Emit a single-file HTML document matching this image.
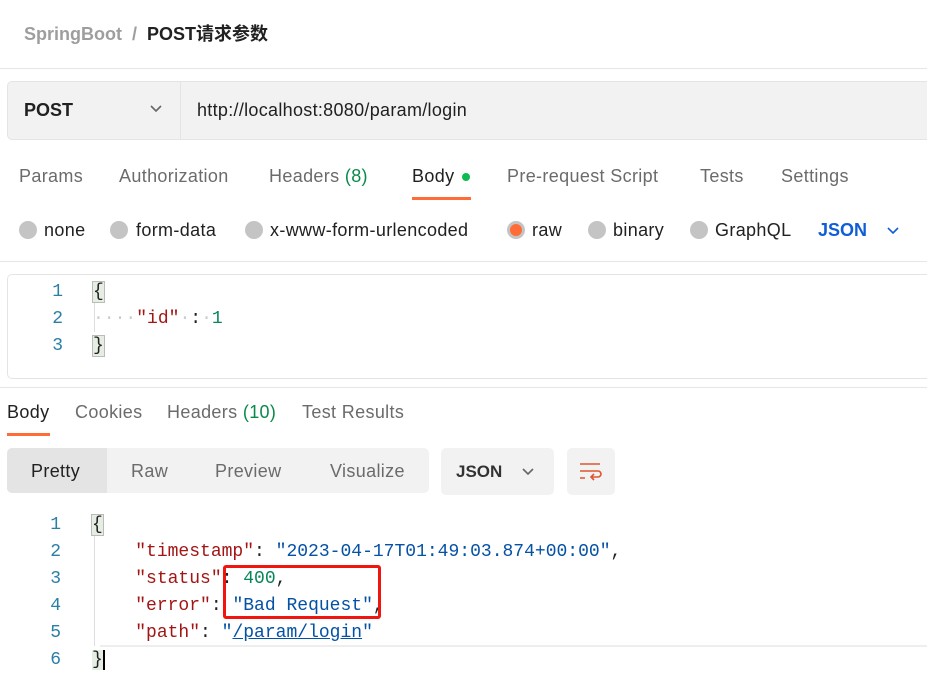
<!DOCTYPE html>
<html><head><meta charset="utf-8"><style>
*{margin:0;padding:0;box-sizing:border-box}
body{width:927px;height:665px;overflow:hidden;background:#fff;font-family:"Liberation Sans","Noto Sans CJK SC",sans-serif;position:relative;color:#212121}
.a{position:absolute;white-space:nowrap}
.t{font-size:18px;letter-spacing:0.35px;color:#6b6b6b}
.m{font-family:"Liberation Mono",monospace;font-size:18px}
.r{width:18px;height:18px;border-radius:50%;background:#c4c4c4;position:absolute}
.ln{color:#2a7fa6;text-align:right;width:30px}
.k{color:#a31515}.s{color:#0451a5}.n{color:#098658}
</style></head><body>
<div class="a" style="left:24px;top:20px;font-size:18px;font-weight:bold;color:#9e9e9e">SpringBoot &nbsp;/ &nbsp;<span style="color:#212121">POST请求参数</span></div>
<div class="a" style="left:0;top:68px;width:927px;height:1px;background:#e6e6e6"></div>
<div class="a" style="left:7px;top:81px;width:930px;height:59px;background:#f2f2f2;border:1px solid #e4e4e4;border-radius:5px"></div>
<div class="a" style="left:180px;top:82px;width:1px;height:57px;background:#e4e4e4"></div>
<div class="a" style="left:24px;top:100px;font-size:18px;font-weight:bold">POST</div>
<svg class="a" style="left:149px;top:104px" width="14" height="10"><path d="M2 2l5 5 5-5" fill="none" stroke="#666" stroke-width="1.6"/></svg>
<div class="a" style="left:197px;top:100px;font-size:18px;letter-spacing:0.3px">http://localhost:8080/param/login</div>
<div class="a t" style="left:19px;top:166px">Params</div>
<div class="a t" style="left:119px;top:166px">Authorization</div>
<div class="a t" style="left:269px;top:166px">Headers <span style="color:#0a8a4a">(8)</span></div>
<div class="a t" style="left:412px;top:166px;color:#212121">Body</div>
<div class="a" style="left:462px;top:173px;width:8px;height:8px;border-radius:50%;background:#0cbb52"></div>
<div class="a" style="left:412px;top:197px;width:59px;height:3px;background:#ff6c37"></div>
<div class="a t" style="left:507px;top:166px">Pre-request Script</div>
<div class="a t" style="left:700px;top:166px">Tests</div>
<div class="a t" style="left:781px;top:166px">Settings</div>
<div class="r" style="left:19px;top:221px"></div><div class="a t" style="left:44px;top:220px;color:#212121">none</div>
<div class="r" style="left:110px;top:221px"></div><div class="a t" style="left:136px;top:220px;color:#212121">form-data</div>
<div class="r" style="left:245px;top:221px"></div><div class="a t" style="left:270px;top:220px;color:#212121">x-www-form-urlencoded</div>
<div class="r" style="left:507px;top:221px;background:#ff6c37;border:3px solid #c4c4c4"></div><div class="a t" style="left:532px;top:220px;color:#212121">raw</div>
<div class="r" style="left:588px;top:221px"></div><div class="a t" style="left:613px;top:220px;color:#212121">binary</div>
<div class="r" style="left:690px;top:221px"></div><div class="a t" style="left:715px;top:220px;color:#212121">GraphQL</div>
<div class="a" style="left:818px;top:220px;font-size:18px;font-weight:bold;color:#0f5ed7">JSON</div>
<svg class="a" style="left:886px;top:226px" width="14" height="10"><path d="M2 2l5 5 5-5" fill="none" stroke="#0f5ed7" stroke-width="1.6"/></svg>
<div class="a" style="left:0;top:261px;width:927px;height:1px;background:#e6e6e6"></div>
<div class="a" style="left:7px;top:274px;width:930px;height:105px;border:1px solid #e4e4e4;border-radius:5px"></div>
<div class="a" style="left:94px;top:302px;width:1px;height:30px;background:#ddd"></div>
<div class="a m ln" style="left:33px;top:279px;line-height:27px">1<br>2<br>3</div>
<div class="a m" style="left:93px;top:279px;line-height:27px"><span style="background:#e6ede2;outline:1px solid #bbb">{</span><br><span style="color:#ccc">····</span><span class="k">"id"</span><span style="color:#ccc">·</span>:<span style="color:#ccc">·</span><span class="n">1</span><br><span style="background:#e6ede2;outline:1px solid #bbb">}</span></div>
<div class="a" style="left:0;top:387px;width:927px;height:1px;background:#e6e6e6"></div>
<div class="a t" style="left:7px;top:402px;color:#212121">Body</div>
<div class="a" style="left:7px;top:433px;width:43px;height:3px;background:#ff6c37"></div>
<div class="a t" style="left:75px;top:402px">Cookies</div>
<div class="a t" style="left:167px;top:402px">Headers <span style="color:#0a8a4a">(10)</span></div>
<div class="a t" style="left:302px;top:402px">Test Results</div>
<div class="a" style="left:7px;top:448px;width:422px;height:45px;background:#f2f2f2;border-radius:5px"></div>
<div class="a" style="left:7px;top:448px;width:100px;height:45px;background:#e4e4e4;border-radius:5px 0 0 5px"></div>
<div class="a t" style="left:31px;top:461px;color:#212121">Pretty</div>
<div class="a t" style="left:131px;top:461px">Raw</div>
<div class="a t" style="left:215px;top:461px">Preview</div>
<div class="a t" style="left:330px;top:461px">Visualize</div>
<div class="a" style="left:441px;top:448px;width:113px;height:47px;background:#f2f2f2;border-radius:5px"></div>
<div class="a" style="left:456px;top:462px;font-size:17px;font-weight:bold;color:#333">JSON</div>
<svg class="a" style="left:521px;top:467px" width="14" height="10"><path d="M2 2l5 5 5-5" fill="none" stroke="#666" stroke-width="1.6"/></svg>
<div class="a" style="left:567px;top:448px;width:48px;height:47px;background:#f2f2f2;border-radius:5px"></div>
<svg class="a" style="left:578px;top:461px" width="26" height="22"><g fill="none" stroke="#e0542c" stroke-width="1.6"><path d="M2 3h20M2 10h18a3 3 0 0 1 0 6h-7M2 17h5"/><path d="M16 13l-3 3 3 3"/></g></svg>
<div class="a" style="left:94px;top:536px;width:1px;height:110px;background:#ddd"></div>
<div class="a" style="left:100px;top:645px;width:827px;height:2px;background:#eee"></div>
<div class="a m ln" style="left:31px;top:512px;line-height:27px">1<br>2<br>3<br>4<br>5<br>6</div>
<div class="a m" style="left:92px;top:512px;line-height:27px;color:#222"><span style="background:#e6ede2;outline:1px solid #bbb">{</span><br>
&nbsp;&nbsp;&nbsp;&nbsp;<span class="k">"timestamp"</span>: <span class="s">"2023-04-17T01:49:03.874+00:00"</span>,<br>
&nbsp;&nbsp;&nbsp;&nbsp;<span class="k">"status"</span>: <span class="n">400</span>,<br>
&nbsp;&nbsp;&nbsp;&nbsp;<span class="k">"error"</span>: <span class="s">"Bad Request"</span>,<br>
&nbsp;&nbsp;&nbsp;&nbsp;<span class="k">"path"</span>: <span class="s">"<u>/param/login</u>"</span><br>
<span style="background:#e6ede2;border-right:2px solid #000">}</span></div>
<div class="a" style="left:223px;top:565px;width:158px;height:54px;border:3px solid #f0160f;border-radius:3px"></div>
</body></html>
